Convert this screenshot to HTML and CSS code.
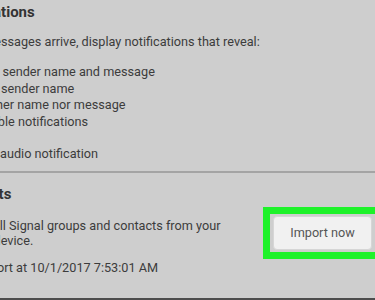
FILE: index.html
```html
<!DOCTYPE html>
<html lang="en">
<head>
    <meta charset="UTF-8">
    <meta name="viewport" content="width=device-width, initial-scale=1.0">
    <title>Settings</title>
    <link rel="stylesheet" href="styles.css">
</head>
<body>
    <div class="settings">
        <section class="group">
            <h3>Notifications</h3>
            <p class="intro">When messages arrive, display notifications that reveal:</p>
            <ul class="options">
                <li><span class="radio checked"></span>Both sender name and message</li>
                <li><span class="radio"></span>Only sender name</li>
                <li><span class="radio"></span>Neither name nor message</li>
                <li><span class="radio"></span>Disable notifications</li>
            </ul>
            <div class="audio"><span class="checkbox"></span>Play audio notification</div>
        </section>
        <section class="group contacts">
            <h3>Contacts</h3>
            <div class="import-row">
                <p class="import-text">Import all Signal groups and contacts from your mobile device.</p>
                <div class="highlight">
                    <button class="import-btn">Import now</button>
                </div>
            </div>
            <p class="last-import">Last import at 10/1/2017 7:53:01 AM</p>
        </section>
    </div>
    <div class="bottom-bar"></div>
</body>
</html>
```

FILE: styles.css
```css
* {
    margin: 0;
    padding: 0;
    box-sizing: border-box;
    font-family: Roboto, "Liberation Sans", sans-serif;
}

html, body {
    height: 300px;
    overflow: hidden;
}

body {
    background-color: #cecece;
    color: #3c3c3c;
    display: flex;
    flex-direction: column;
}

.settings {
    flex: 1;
    margin-left: -52px;
    font-size: 12.7px;
}

.group {
    padding-top: 3px;
}

.group h3 {
    font-size: 15px;
    font-weight: 700;
    line-height: 18px;
    color: #333;
}

.intro {
    margin-top: 13px;
    line-height: 16px;
}

.options {
    list-style: none;
    margin-top: 14px;
}

.options li,
.audio {
    display: flex;
    align-items: center;
    gap: 4px;
    line-height: 16.5px;
}

.radio,
.checkbox {
    width: 13px;
    height: 13px;
    margin-left: 8px;
    border: 1px solid #777;
    background-color: #f4f4f4;
}

.radio {
    border-radius: 50%;
}

.audio {
    margin-top: 16px;
    padding-bottom: 8px;
    border-bottom: 2px solid #a4a4a4;
    margin-right: -52px;
}

.contacts {
    padding-top: 12px;
}

.contacts h3 {
    padding-left: 3px;
}

.import-row {
    display: flex;
    align-items: center;
    justify-content: space-between;
    margin-top: 4px;
}

.import-text {
    width: 275px;
    padding-left: 4px;
    line-height: 15px;
}

.highlight {
    border: 7px solid #1ef22a;
    border-right: none;
    padding: 2px 3px;
}

.import-btn {
    width: 99px;
    height: 34px;
    border: 1px solid #d6d6d6;
    border-radius: 4px;
    background-color: #f1f1f1;
    color: #555;
    font-size: 12.7px;
}

.last-import {
    margin-top: 1px;
    line-height: 16px;
}

.bottom-bar {
    height: 2px;
    background-color: #4d4d4d;
}
```
